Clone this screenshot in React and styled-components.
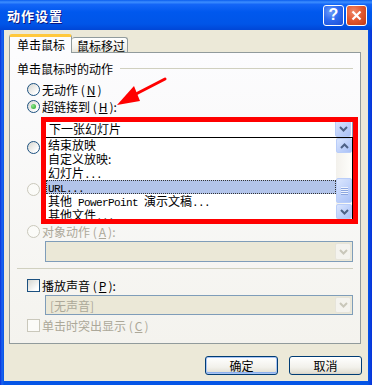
import React from "react";
import styled, { createGlobalStyle } from "styled-components";

const GlobalStyle = createGlobalStyle`
  html, body { margin: 0; padding: 0; background: #ffffff; }
  body { font-family: "Noto Sans CJK SC", "Liberation Sans", sans-serif; font-size: 12px; }
  * { box-sizing: border-box; }
`;

const Window = styled.div`
  position: relative;
  width: 372px;
  height: 385px;
  display: flex;
  flex-direction: column;
  background: linear-gradient(to right, #0831d9 0px, #1c64f0 2px, #0555e6 4px, #0555e6 calc(100% - 4px), #0831d9 100%);
  overflow: hidden;
`;

const TitleBar = styled.div`
  height: 30px;
  flex: none;
  display: flex;
  align-items: center;
  padding: 0 5px 0 7px;
  background: linear-gradient(to bottom, #0a5dee 0%, #3d8eff 7%, #1466f7 15%, #0058ee 40%, #0055e8 80%, #0046d6 100%);
`;

const Title = styled.div`
  flex: 1;
  color: #ffffff;
  font-weight: bold;
  font-size: 13px;
  letter-spacing: 1px;
  padding-top: 1px;
  text-shadow: 1px 1px 0 #0a1883;
`;

const CaptionButton = styled.div`
  width: 21px;
  height: 21px;
  margin-left: 2px;
  border: 1px solid #ffffff;
  border-radius: 3px;
  display: flex;
  align-items: center;
  justify-content: center;
  color: #ffffff;
  font-family: "Liberation Sans", sans-serif;
  font-weight: bold;
  font-size: 16px;
  background: ${(p) =>
    p.$close
      ? "radial-gradient(circle at 35% 30%, #f08a6a 0%, #e35a32 45%, #c23a12 100%)"
      : "radial-gradient(circle at 35% 30%, #6f9cf8 0%, #2f6bf0 45%, #1a4fd6 100%)"};
`;

const Body = styled.div`
  flex: 1;
  margin: 0 4px 4px;
  background: #ece9d8;
  display: flex;
  flex-direction: column;
  padding: 4px 7px 0 5px;
`;

const TabStrip = styled.div`
  height: 18px;
  flex: none;
  display: flex;
  align-items: flex-end;
`;

const Tab = styled.div`
  position: relative;
  z-index: ${(p) => (p.$active ? 1 : 0)};
  width: ${(p) => (p.$active ? 63 : 56)}px;
  height: ${(p) => (p.$active ? 19 : 15)}px;
  margin-bottom: ${(p) => (p.$active ? -1 : 0)}px;
  border: 1px solid #919b9c;
  border-bottom: none;
  border-left: ${(p) => (p.$active ? "1px solid #919b9c" : "none")};
  border-top: ${(p) => (p.$active ? "3px solid #ffc83c" : "1px solid #919b9c")};
  border-radius: 3px 3px 0 0;
  background: ${(p) => (p.$active ? "#fcfcfe" : "linear-gradient(to bottom, #ffffff, #f3f2ec 70%, #e6e4da)")};
  display: flex;
  align-items: center;
  padding-left: ${(p) => (p.$active ? 7 : 5)}px;
  padding-bottom: ${(p) => (p.$active ? 1 : 0)}px;
  color: #000;
  white-space: nowrap;
`;

const Panel = styled.div`
  height: 292px;
  flex: none;
  border: 1px solid #919b9c;
  background: linear-gradient(to bottom, #fcfcfe, #f4f3ee);
  padding: 8px 7px 0 7px;
  display: flex;
  flex-direction: column;
`;

const GroupHeader = styled.div`
  height: 14px;
  display: flex;
  align-items: center;
  color: #000;
`;

const Rule = styled.div`
  flex: 1;
  height: 1px;
  margin-left: 7px;
  background: #d0d0bf;
`;

const OptionRow = styled.div`
  display: flex;
  align-items: center;
  height: 17px;
  padding-left: 10px;
  gap: 2px;
  margin-top: ${(p) => p.$mt || 0}px;
  color: ${(p) => (p.$disabled ? "#aca899" : "#000")};
  white-space: nowrap;
`;

const Radio = styled.span`
  width: 13px;
  height: 13px;
  flex: none;
  border-radius: 50%;
  border: 1px solid ${(p) => (p.$disabled ? "#cac8bb" : "#1c5180")};
  background: ${(p) => (p.$disabled ? "#fbfbf8" : "linear-gradient(135deg, #d6d6d0, #ffffff 80%)")};
  display: flex;
  align-items: center;
  justify-content: center;
  &::after {
    content: "";
    display: ${(p) => (p.$checked ? "block" : "none")};
    width: 5px;
    height: 5px;
    border-radius: 50%;
    background: radial-gradient(circle at 35% 35%, #8ee68e, #21a121);
  }
`;

const Check = styled.span`
  width: 13px;
  height: 13px;
  flex: none;
  border: 1px solid ${(p) => (p.$disabled ? "#cac8bb" : "#1c5180")};
  background: ${(p) => (p.$disabled ? "#fbfbf8" : "linear-gradient(135deg, #d6d6d0, #ffffff 80%)")};
`;

const Combo = styled.div`
  position: relative;
  margin-left: 28px;
  margin-top: ${(p) => p.$mt || 0}px;
  height: ${(p) => p.$h || 21}px;
  flex: none;
  border: 1px solid #7f9db9;
  background: ${(p) => (p.$disabled ? "#ebe8d7" : "#ffffff")};
  display: flex;
  align-items: center;
  padding: 1px;
`;

const ComboText = styled.div`
  flex: 1;
  padding-left: ${(p) => p.$pl || 2}px;
  color: ${(p) => (p.$disabled ? "#aca899" : "#000")};
  white-space: nowrap;
  overflow: hidden;
`;

const DropButton = styled.div`
  width: 16px;
  height: 100%;
  flex: none;
  border-radius: 2px;
  border: 1px solid ${(p) => (p.$disabled ? "#e6e4da" : "#b9cdf9")};
  background: ${(p) =>
    p.$disabled ? "#f4f3ee" : "linear-gradient(135deg, #dbe6fe, #bccffa 60%, #a9c0f6)"};
  display: flex;
  align-items: center;
  justify-content: center;
  color: ${(p) => (p.$disabled ? "#c9c7ba" : "#4d6185")};
`;

const InputRow = styled.div`
  margin-left: 28px;
  margin-top: ${(p) => p.$mt || 0}px;
  height: 21px;
  flex: none;
  display: flex;
  gap: 6px;
`;

const TextInput = styled.div`
  flex: 1;
  border: 1px solid #7f9db9;
  background: #ffffff;
`;

const SmallButton = styled.div`
  width: 72px;
  border: 1px solid #003c74;
  border-radius: 3px;
  background: linear-gradient(to bottom, #ffffff, #ecebe6 85%, #d6d0c5);
`;

const Separator = styled.div`
  height: 1px;
  flex: none;
  margin-top: ${(p) => p.$mt || 0}px;
  background: #d0d0bf;
`;

const DropList = styled.div`
  position: absolute;
  z-index: 2;
  left: -1px;
  right: -1px;
  top: 18px;
  height: 83px;
  border: 1px solid #000000;
  background: #ffffff;
  display: flex;
`;

const ListItems = styled.div`
  flex: 1;
  overflow: hidden;
`;

const ListItem = styled.div`
  height: 14px;
  line-height: 14px;
  padding-left: 2px;
  white-space: nowrap;
  color: #000;
  background: ${(p) => (p.$selected ? "#b2c4ea" : "transparent")};
  outline: ${(p) => (p.$selected ? "1px dotted #333" : "none")};
  outline-offset: -1px;
`;

const Mono = styled.span`
  font-family: "Liberation Mono", "DejaVu Sans Mono", monospace;
  font-size: 11px;
  letter-spacing: -0.6px;
`;

const ScrollBar = styled.div`
  width: 16px;
  flex: none;
  display: flex;
  flex-direction: column;
  background: linear-gradient(to right, #f3f1ec, #fefefb);
`;

const ScrollButton = styled.div`
  height: ${(p) => p.$h || 15}px;
  flex: none;
  margin-top: ${(p) => p.$mt || 0}px;
  border: 1px solid #b9cdf9;
  border-radius: 2px;
  background: linear-gradient(135deg, #dbe6fe, #bccffa 60%, #aac1f6);
  display: flex;
  align-items: center;
  justify-content: center;
  color: #4d6185;
`;

const Track = styled.div`
  flex: 1;
  display: flex;
  flex-direction: column;
`;

const Footer = styled.div`
  display: flex;
  justify-content: flex-end;
  gap: 11px;
  margin-top: 12px;
  margin-right: -1px;
`;

const Button = styled.div`
  width: 73px;
  height: 19px;
  border: 1px solid #003c74;
  border-radius: 3px;
  background: linear-gradient(to bottom, #ffffff, #f2f1eb 60%, #e3e0d5 90%, #d6d0c5);
  box-shadow: ${(p) => (p.$default ? "inset 0 0 0 1px #a9c4f3, inset 0 -1px 0 1px #8cb0ee" : "none")};
  display: flex;
  align-items: center;
  justify-content: center;
  color: #000;
`;

const RedBox = styled.div`
  position: absolute;
  z-index: 5;
  left: 41px;
  top: 117px;
  width: 317px;
  height: 107px;
  border: 5px solid #ff0000;
  pointer-events: none;
`;

const Overlay = styled.svg`
  position: absolute;
  z-index: 6;
  left: 0;
  top: 0;
  pointer-events: none;
`;

const Chevron = ({ up }) => (
  <svg width="9" height="6" viewBox="0 0 9 6">
    <path
      d={up ? "M1 5 L4.5 1.5 L8 5" : "M1 1 L4.5 4.5 L8 1"}
      fill="none"
      stroke="currentColor"
      strokeWidth="2"
    />
  </svg>
);

const Grip = () => (
  <svg width="7" height="8" viewBox="0 0 7 8">
    {[0.5, 2.5, 4.5, 6.5].map((y) => (
      <line key={y} x1="0" x2="7" y1={y} y2={y} stroke="#eef3fe" strokeWidth="1" />
    ))}
    {[1.5, 3.5, 5.5, 7.5].map((y) => (
      <line key={y} x1="0" x2="7" y1={y} y2={y} stroke="#8ca6e0" strokeWidth="1" />
    ))}
  </svg>
);

const Key = ({ k }) => (
  <>
    {" "}(<u>{k}</u>)
  </>
);

const listItems = [
  { label: "结束放映" },
  { label: "自定义放映:" },
  { label: <>幻灯片<Mono>...</Mono></> },
  { label: <Mono>URL...</Mono>, selected: true },
  { label: <>其他<Mono> PowerPoint </Mono>演示文稿<Mono>...</Mono></> },
  { label: <>其他文件<Mono>...</Mono></> },
];

export default function App() {
  return (
    <>
      <GlobalStyle />
      <Window>
        <TitleBar>
          <Title>动作设置</Title>
          <CaptionButton>?</CaptionButton>
          <CaptionButton $close>
            <svg width="11" height="11" viewBox="0 0 11 11">
              <path d="M1.5 1.5 L9.5 9.5 M9.5 1.5 L1.5 9.5" stroke="#fff" strokeWidth="2.2" />
            </svg>
          </CaptionButton>
        </TitleBar>
        <Body>
          <TabStrip>
            <Tab $active>单击鼠标</Tab>
            <Tab>鼠标移过</Tab>
          </TabStrip>
          <Panel>
            <GroupHeader>
              单击鼠标时的动作
              <Rule />
            </GroupHeader>
            <OptionRow $mt={6}>
              <Radio />
              无动作<Key k="N" />
            </OptionRow>
            <OptionRow>
              <Radio $checked />
              超链接到<Key k="H" />:
            </OptionRow>
            <Combo $mt={3}>
              <ComboText>下一张幻灯片</ComboText>
              <DropButton>
                <Chevron />
              </DropButton>
              <DropList>
                <ListItems>
                  {listItems.map((it, i) => (
                    <ListItem key={i} $selected={it.selected}>
                      {it.label}
                    </ListItem>
                  ))}
                </ListItems>
                <ScrollBar>
                  <ScrollButton>
                    <Chevron up />
                  </ScrollButton>
                  <Track>
                    <ScrollButton $mt={25} $h={25}>
                      <Grip />
                    </ScrollButton>
                  </Track>
                  <ScrollButton>
                    <Chevron />
                  </ScrollButton>
                </ScrollBar>
              </DropList>
            </Combo>
            <OptionRow>
              <Radio />
            </OptionRow>
            <InputRow $mt={2}>
              <TextInput />
              <SmallButton />
            </InputRow>
            <OptionRow $mt={2} $disabled>
              <Radio $disabled />
            </OptionRow>
            <Combo $mt={1} $disabled>
              <ComboText $disabled />
              <DropButton $disabled>
                <Chevron />
              </DropButton>
            </Combo>
            <OptionRow $mt={3} $disabled>
              <Radio $disabled />
              对象动作<Key k="A" />:
            </OptionRow>
            <Combo $mt={1} $disabled>
              <ComboText $disabled />
              <DropButton $disabled>
                <Chevron />
              </DropButton>
            </Combo>
            <Separator $mt={6} />
            <OptionRow $mt={8}>
              <Check />
              播放声音<Key k="P" />:
            </OptionRow>
            <Combo $mt={1} $h={20} $disabled>
              <ComboText $disabled $pl={3}>[无声音]</ComboText>
              <DropButton $disabled>
                <Chevron />
              </DropButton>
            </Combo>
            <OptionRow $mt={2} $disabled>
              <Check $disabled />
              单击时突出显示<Key k="C" />
            </OptionRow>
          </Panel>
          <Footer>
            <Button $default>确定</Button>
            <Button>取消</Button>
          </Footer>
        </Body>
        <RedBox />
        <Overlay width="372" height="385" viewBox="0 0 372 385">
          <line x1="165" y1="79" x2="134" y2="95" stroke="#ff0000" strokeWidth="3" strokeLinecap="round" />
          <polygon points="117,105 134,86 140,101" fill="#ff0000" />
        </Overlay>
      </Window>
    </>
  );
}
